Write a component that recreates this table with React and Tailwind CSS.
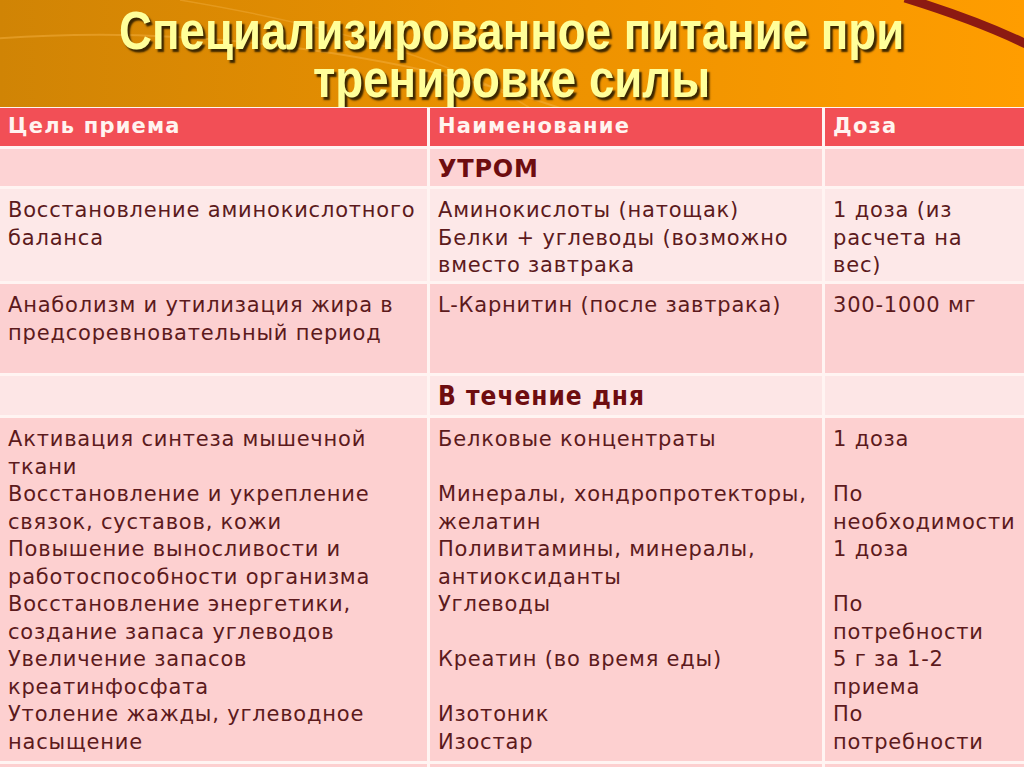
const V = "font-['DejaVu_Sans',sans-serif] tracking-[0.8px]";

function Cell({ children, className = "" }) {
  return (
    <div className={"px-[8px] pt-[8px] text-[21px] leading-[27.5px] text-[#5c1a1c] " + V + " " + className}>
      {children}
    </div>
  );
}

function Lines({ items }) {
  return items.map((t, i) => (
    <div key={i} className="whitespace-pre">{t === "" ? "\u00a0" : t}</div>
  ));
}

export default function App() {
  const head = "h-[38px] bg-[#f24f56] px-[8px] flex items-center text-[21px] font-bold text-[#fff4f0] font-['DejaVu_Sans',sans-serif] tracking-[1.2px]";
  return (
    <div className="relative w-[1024px] h-[767px] overflow-hidden bg-[linear-gradient(90deg,#d08405_0%,#e99000_45%,#ff9d00_100%)]">
      <svg className="absolute left-0 top-0" width="1024" height="110" viewBox="0 0 1024 110">
        <path d="M-20 40 C 200 20, 420 60, 560 108" stroke="#f3b040" strokeWidth="2" fill="none" opacity="0.5" />
        <path d="M180 0 C 360 30, 470 70, 530 108" stroke="#f7b850" strokeWidth="1.5" fill="none" opacity="0.35" />
        <path d="M905 -2 C 950 12, 990 26, 1030 46" stroke="#8c1a12" strokeWidth="9" fill="none" />
      </svg>

      <div className="relative h-[107px] flex flex-col items-center pt-[6px]">
        <div className="scale-x-[0.845] font-['Liberation_Sans',sans-serif] font-bold text-[54px] leading-[48px] text-[#ffff9a] text-center whitespace-nowrap [text-shadow:3px_3px_2px_#3b2600]">
          <div>Специализированное питание при</div>
          <div>тренировке силы</div>
        </div>
      </div>

      <div className="relative grid grid-cols-[427px_392px_1fr] gap-[3px] bg-[#fff4f2] pt-[1px]">
        {/* header */}
        <div className={head}>Цель приема</div>
        <div className={head}>Наименование</div>
        <div className={head}>Доза</div>

        {/* УТРОМ */}
        <div className="h-[37px] bg-[#fdd3d4]"></div>
        <div className="h-[37px] bg-[#fdd3d4] px-[8px] pt-[2px] flex items-center text-[24px] font-bold text-[#6e0d10] font-['DejaVu_Sans',sans-serif] tracking-[0.8px]">УТРОМ</div>
        <div className="h-[37px] bg-[#fdd3d4]"></div>

        {/* row 3 */}
        <Cell className="h-[92px] bg-[#fde8e8]">
          <Lines items={["Восстановление аминокислотного", "баланса"]} />
        </Cell>
        <Cell className="h-[92px] bg-[#fde8e8]">
          <Lines items={["Аминокислоты (натощак)", "Белки + углеводы (возможно", "вместо завтрака"]} />
        </Cell>
        <Cell className="h-[92px] bg-[#fde8e8]">
          <Lines items={["1 доза (из", "расчета на", "вес)"]} />
        </Cell>

        {/* row 4 */}
        <Cell className="h-[89px] bg-[#fcd0d1] pt-[6px]">
          <Lines items={["Анаболизм и утилизация жира в", "предсоревновательный период"]} />
        </Cell>
        <Cell className="h-[89px] bg-[#fcd0d1] pt-[6px]">
          <Lines items={["L-Карнитин (после завтрака)"]} />
        </Cell>
        <Cell className="h-[89px] bg-[#fcd0d1] pt-[6px]">
          <Lines items={["300-1000 мг"]} />
        </Cell>

        {/* В течение дня */}
        <div className="h-[39px] bg-[#fde6e6]"></div>
        <div className="h-[39px] bg-[#fde6e6] px-[8px] pt-[2px] flex items-center text-[26px] font-bold text-[#6e0d10] font-['DejaVu_Sans_Condensed','DejaVu_Sans',sans-serif] tracking-[1px]">В течение дня</div>
        <div className="h-[39px] bg-[#fde6e6]"></div>

        {/* row 6 */}
        <Cell className="h-[343px] bg-[#fdd0d0] pt-[5px]">
          <Lines
            items={[
              "Активация синтеза мышечной",
              "ткани",
              "Восстановление и укрепление",
              "связок, суставов, кожи",
              "Повышение выносливости и",
              "работоспособности организма",
              "Восстановление энергетики,",
              "создание запаса углеводов",
              "Увеличение запасов",
              "креатинфосфата",
              "Утоление жажды, углеводное",
              "насыщение",
            ]}
          />
        </Cell>
        <Cell className="h-[343px] bg-[#fdd0d0] pt-[5px]">
          <Lines
            items={[
              "Белковые концентраты",
              "",
              "Минералы, хондропротекторы,",
              "желатин",
              "Поливитамины, минералы,",
              "антиоксиданты",
              "Углеводы",
              "",
              "Креатин (во время еды)",
              "",
              "Изотоник",
              "Изостар",
            ]}
          />
        </Cell>
        <Cell className="h-[343px] bg-[#fdd0d0] pt-[5px]">
          <Lines
            items={[
              "1 доза",
              "",
              "По",
              "необходимости",
              "1 доза",
              "",
              "По",
              "потребности",
              "5 г за 1-2",
              "приема",
              "По",
              "потребности",
            ]}
          />
        </Cell>

        <div className="h-[10px] bg-[#fdd0d0]"></div>
        <div className="h-[10px] bg-[#fdd0d0]"></div>
        <div className="h-[10px] bg-[#fdd0d0]"></div>
      </div>
    </div>
  );
}
